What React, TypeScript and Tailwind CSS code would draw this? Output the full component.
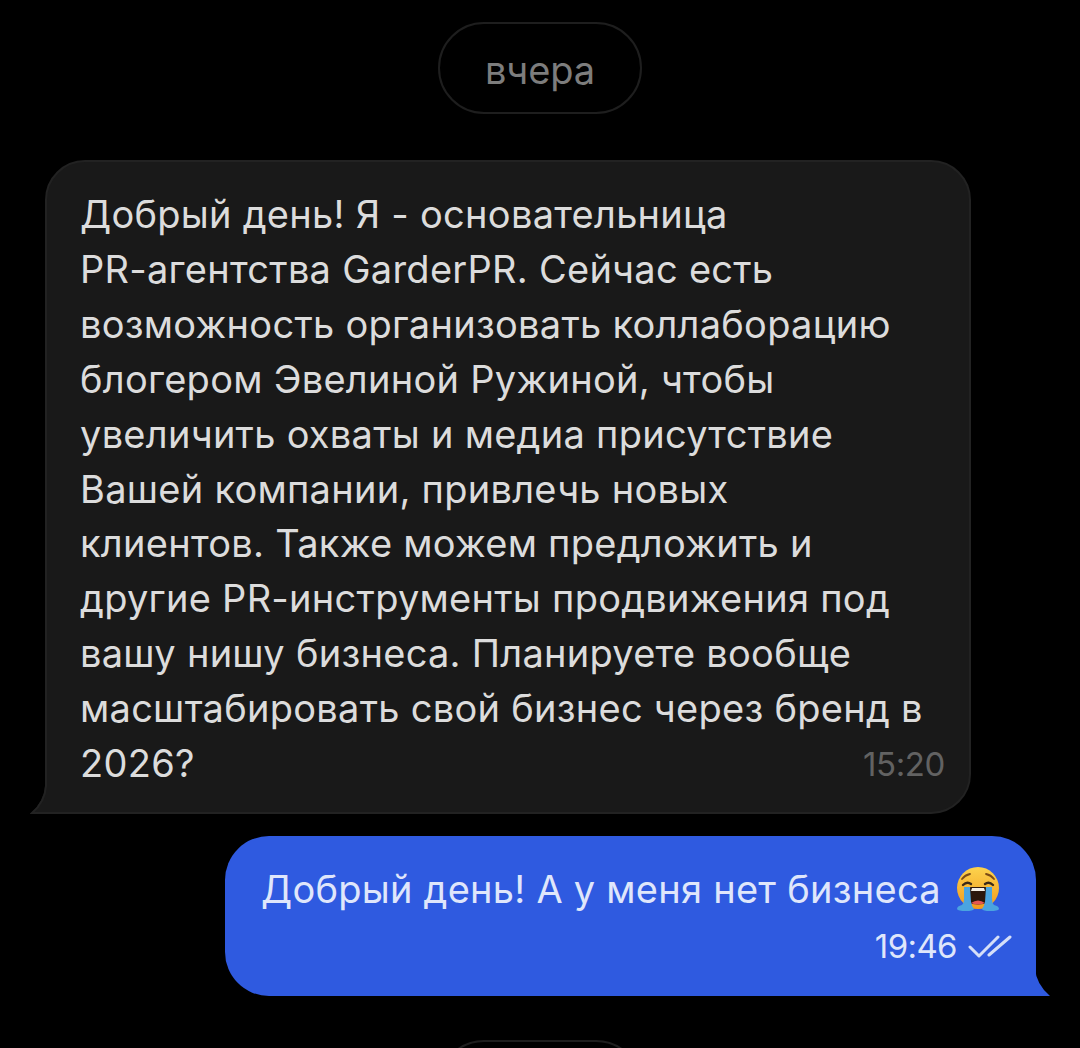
const incomingLines = [
  "Добрый день! Я - основательница",
  "PR-агентства GarderPR. Сейчас есть",
  "возможность организовать коллаборацию",
  "блогером Эвелиной Ружиной, чтобы",
  "увеличить охваты и медиа присутствие",
  "Вашей компании, привлечь новых",
  "клиентов. Также можем предложить и",
  "другие PR-инструменты продвижения под",
  "вашу нишу бизнеса. Планируете вообще",
  "масштабировать свой бизнес через бренд в",
];

function DatePill({ label }: { label?: string }) {
  return (
    <div className="mx-auto flex h-[92px] w-[204px] shrink-0 items-center justify-center rounded-[46px] border-2 border-[#1e1e1e] bg-black pt-1 text-[38px] tracking-[-0.1px] text-[#7d7d7d]">
      {label}
    </div>
  );
}

function CryingEmoji() {
  return (
    <svg width="44" height="45" viewBox="0 0 44 45" className="shrink-0">
      <defs>
        <linearGradient id="face" x1="0" y1="0" x2="0" y2="1">
          <stop offset="0" stopColor="#fcd34d" />
          <stop offset="1" stopColor="#f29a1c" />
        </linearGradient>
      </defs>
      <circle cx="22" cy="21" r="21" fill="url(#face)" />
      {/* brows and shut eyes */}
      <path d="M6 12q3-4 8-5M38 12q-3-4-8-5" fill="none" stroke="#7a4a14" strokeWidth="1.800" strokeLinecap="round" />
      <path d="M7 18q4-4 8-1M29 17q4-3 8 1" fill="none" stroke="#3b2a18" strokeWidth="2.400" strokeLinecap="round" />
      {/* open mouth */}
      <path d="M15 20h14q2 0 2 2l2 13q-11 5-22 0l2-13q0-2 2-2z" fill="#2b170c" />
      <path d="M16 21h12l1 3H15z" fill="#f4efe6" />
      <path d="M15 36q7-5 14 0q-7 3-14 0z" fill="#e4574f" />
      {/* tears */}
      <path d="M8 20h6l1 15q1 5 3 7q-1 2-8 2q-8 0-9-2q0-3 5-4q2-2 2-6z" fill="#4aa4e0" />
      <path d="M36 20h-6l-1 15q-1 5-3 7q1 2 8 2q8 0 9-2q0-3-5-4q-2-2-2-6z" fill="#4aa4e0" />
    </svg>
  );
}

function DoubleCheck() {
  return (
    <svg width="44" height="24" viewBox="0 0 44 24" fill="none" stroke="#d5dff8" strokeWidth="3" strokeLinecap="round" strokeLinejoin="round">
      <path d="M2 13l9 9L30 3" />
      <path d="M21 21L42 3" />
    </svg>
  );
}

export default function App() {
  return (
    <div className="flex h-[1048px] w-[1080px] flex-col overflow-hidden bg-black pt-[22px] font-['Inter',sans-serif]">
      <DatePill label="вчера" />

      {/* incoming message */}
      <div className="relative ml-[45px] mt-[46px] h-[654px] w-[926px] shrink-0">
        <div className="h-full rounded-[40px] rounded-bl-none border-2 border-[#222222] bg-[#191919] pl-[33px] pr-[24px] pt-[25px] text-[38px] leading-[54.9px] tracking-[0.27px] text-[#dcdcdc]">
          {incomingLines.map((line) => (
            <div key={line} className="whitespace-nowrap">{line}</div>
          ))}
          <div className="flex items-end justify-between">
            <span>2026?</span>
            <span className="text-[33px] leading-[54px] tracking-[-0.4px] text-[#626262]">15:20</span>
          </div>
        </div>
        <svg width="18" height="28" viewBox="0 0 18 28" className="absolute bottom-0 left-[-15px]">
          <path d="M15 0Q14 16 0 28h18V0z" fill="#191919" />
          <path d="M16 0Q15 16 2 27H18" fill="none" stroke="#222222" strokeWidth="2" />
        </svg>
      </div>

      {/* outgoing message */}
      <div className="relative ml-[225px] mt-[22px] h-[160px] w-[811px] shrink-0">
        <div className="flex h-full flex-col rounded-[44px] rounded-br-none bg-[#2f5ae0] pl-[36px] pr-[24px] pt-[26px] text-[38px] text-[#dfe6fb]">
          <div className="flex items-center gap-[15px] leading-[54px] tracking-[0.25px]">
            <span className="whitespace-nowrap">Добрый день! А у меня нет бизнеса</span>
            <CryingEmoji />
          </div>
          <div className="mt-[3px] flex items-center justify-end gap-[11px] text-[33px] leading-[54px] tracking-[-0.6px]">
            <span>19:46</span>
            <DoubleCheck />
          </div>
        </div>
        <svg width="16" height="28" viewBox="0 0 16 28" className="absolute bottom-0 right-[-15px]">
          <path d="M0 0Q1 16 15 28H0z" fill="#2f5ae0" />
        </svg>
      </div>

      <div className="mt-[44px]">
        <DatePill />
      </div>
    </div>
  );
}
